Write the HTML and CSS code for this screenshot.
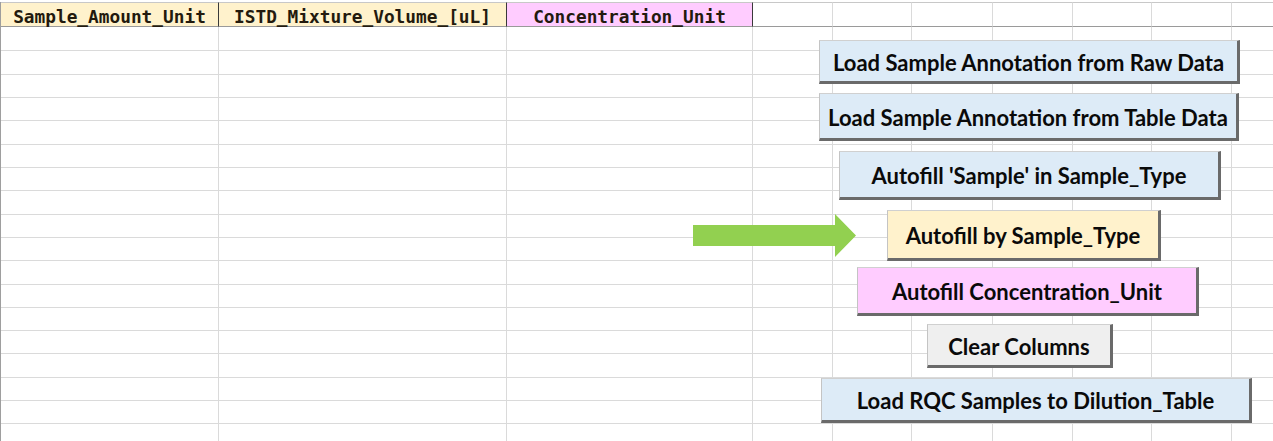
FILE: index.html
```html
<!DOCTYPE html>
<html>
<head>
<meta charset="utf-8">
<link rel="stylesheet" href="styles.css">
</head>
<body>
<div class="sheet">
  <div class="grid">
    <div class="h h-tan">Sample_Amount_Unit</div><div class="h h-tan">ISTD_Mixture_Volume_[uL]</div><div class="h h-pink">Concentration_Unit</div><div class="h"></div><div class="h"></div><div class="h"></div><div class="h"></div><div class="h"></div><div class="h"></div><div class="h"></div>
    <div class="c"></div><div class="c"></div><div class="c"></div><div class="c"></div><div class="c"></div><div class="c"></div><div class="c"></div><div class="c"></div><div class="c"></div><div class="c"></div>
    <div class="c"></div><div class="c"></div><div class="c"></div><div class="c"></div><div class="c"></div><div class="c"></div><div class="c"></div><div class="c"></div><div class="c"></div><div class="c"></div>
    <div class="c"></div><div class="c"></div><div class="c"></div><div class="c"></div><div class="c"></div><div class="c"></div><div class="c"></div><div class="c"></div><div class="c"></div><div class="c"></div>
    <div class="c"></div><div class="c"></div><div class="c"></div><div class="c"></div><div class="c"></div><div class="c"></div><div class="c"></div><div class="c"></div><div class="c"></div><div class="c"></div>
    <div class="c"></div><div class="c"></div><div class="c"></div><div class="c"></div><div class="c"></div><div class="c"></div><div class="c"></div><div class="c"></div><div class="c"></div><div class="c"></div>
    <div class="c"></div><div class="c"></div><div class="c"></div><div class="c"></div><div class="c"></div><div class="c"></div><div class="c"></div><div class="c"></div><div class="c"></div><div class="c"></div>
    <div class="c"></div><div class="c"></div><div class="c"></div><div class="c"></div><div class="c"></div><div class="c"></div><div class="c"></div><div class="c"></div><div class="c"></div><div class="c"></div>
    <div class="c"></div><div class="c"></div><div class="c"></div><div class="c"></div><div class="c"></div><div class="c"></div><div class="c"></div><div class="c"></div><div class="c"></div><div class="c"></div>
    <div class="c"></div><div class="c"></div><div class="c"></div><div class="c"></div><div class="c"></div><div class="c"></div><div class="c"></div><div class="c"></div><div class="c"></div><div class="c"></div>
    <div class="c"></div><div class="c"></div><div class="c"></div><div class="c"></div><div class="c"></div><div class="c"></div><div class="c"></div><div class="c"></div><div class="c"></div><div class="c"></div>
    <div class="c"></div><div class="c"></div><div class="c"></div><div class="c"></div><div class="c"></div><div class="c"></div><div class="c"></div><div class="c"></div><div class="c"></div><div class="c"></div>
    <div class="c"></div><div class="c"></div><div class="c"></div><div class="c"></div><div class="c"></div><div class="c"></div><div class="c"></div><div class="c"></div><div class="c"></div><div class="c"></div>
    <div class="c"></div><div class="c"></div><div class="c"></div><div class="c"></div><div class="c"></div><div class="c"></div><div class="c"></div><div class="c"></div><div class="c"></div><div class="c"></div>
    <div class="c"></div><div class="c"></div><div class="c"></div><div class="c"></div><div class="c"></div><div class="c"></div><div class="c"></div><div class="c"></div><div class="c"></div><div class="c"></div>
    <div class="c"></div><div class="c"></div><div class="c"></div><div class="c"></div><div class="c"></div><div class="c"></div><div class="c"></div><div class="c"></div><div class="c"></div><div class="c"></div>
    <div class="c"></div><div class="c"></div><div class="c"></div><div class="c"></div><div class="c"></div><div class="c"></div><div class="c"></div><div class="c"></div><div class="c"></div><div class="c"></div>
    <div class="c"></div><div class="c"></div><div class="c"></div><div class="c"></div><div class="c"></div><div class="c"></div><div class="c"></div><div class="c"></div><div class="c"></div><div class="c"></div>
    <div class="c"></div><div class="c"></div><div class="c"></div><div class="c"></div><div class="c"></div><div class="c"></div><div class="c"></div><div class="c"></div><div class="c"></div><div class="c"></div>
  </div>

  <svg class="arrow" width="164" height="44" viewBox="0 0 164 44" aria-hidden="true">
    <polygon points="0,11 142,11 142,0 163,21.5 142,43 142,32 0,32" fill="#92d050"/>
  </svg>

  <button class="btn blue b1">Load Sample Annotation from Raw Data</button>
  <button class="btn blue b2">Load Sample Annotation from Table Data</button>
  <button class="btn blue b3">Autofill 'Sample' in Sample_Type</button>
  <button class="btn tan b4">Autofill by Sample_Type</button>
  <button class="btn pink b5">Autofill Concentration_Unit</button>
  <button class="btn gray b6">Clear Columns</button>
  <button class="btn blue b7">Load RQC Samples to Dilution_Table</button>
</div>
</body>
</html>
```

FILE: styles.css
```css
html, body {
  margin: 0;
  padding: 0;
  background: #ffffff;
  overflow: hidden;
}

.sheet {
  position: relative;
  width: 1273px;
  height: 441px;
  overflow: hidden;
  padding-top: 2px;
  box-sizing: border-box;
}

.grid {
  display: grid;
  grid-template-columns: 218px 288px 246px 80px 79px 81px 80px 79px 80px 80px;
  grid-template-rows: 25px 24px 24px 23px 23px 24px 23px 23px 24px 23px 23px 24px 23px 23px 23px 24px 23px 23px 23px;
  border-left: 1px solid #9e9e9e;
  width: max-content;
}

.grid > div {
  box-sizing: border-box;
}

.c {
  border-right: 1px solid #dadada;
  border-bottom: 1px solid #dadada;
}

.h {
  border-top: 1px solid #c8c8c8;
  border-bottom: 1px solid #9a9a9a;
  border-right: 1px solid #dadada;
  font-family: "DejaVu Sans Mono", "Liberation Mono", monospace;
  font-weight: bold;
  font-size: 17.8px;
  color: #231a0e;
  display: flex;
  align-items: center;
  justify-content: center;
  padding-top: 3px;
  white-space: nowrap;
}

.h-tan {
  background: #fff2cc;
  border-right: 1px solid #3a3a3a;
}

.h-pink {
  background: #ffccff;
  border-right: 1px solid #3a3a3a;
}

.arrow {
  position: absolute;
  left: 693px;
  top: 214px;
}

.btn {
  position: absolute;
  box-sizing: border-box;
  margin: 0;
  padding: 2px 0 0;
  border-top: 1px solid #d0d0d0;
  border-left: 1px solid #c4c4c4;
  border-right: 3px solid #6a6a6a;
  border-bottom: 3px solid #6a6a6a;
  font-family: "Lato", "Liberation Sans", sans-serif;
  font-weight: bold;
  font-size: 22px;
  color: #0a0a0a;
  display: flex;
  align-items: center;
  justify-content: center;
  white-space: nowrap;
}

.blue { background: #ddebf7; }
.tan { background: #fff2cc; }
.pink { background: #ffccff; }
.gray { background: #efefef; }

.b1 { left: 819px; top: 40px; width: 421px; height: 44px; }
.b2 { left: 819px; top: 93px; width: 420px; height: 48px; }
.b3 { left: 839px; top: 151px; width: 382px; height: 49px; }
.b4 { left: 887px; top: 210px; width: 274px; height: 51px; }
.b5 { left: 857px; top: 267px; width: 342px; height: 49px; }
.b6 { left: 927px; top: 324px; width: 186px; height: 44px; }
.b7 { left: 821px; top: 378px; width: 431px; height: 45px; }
```
